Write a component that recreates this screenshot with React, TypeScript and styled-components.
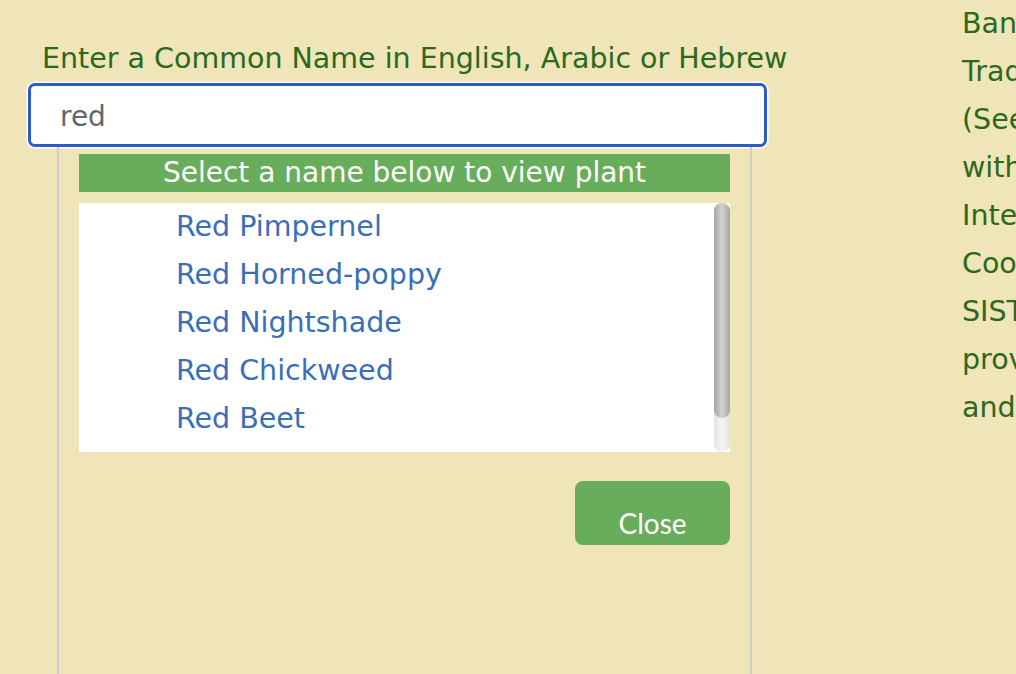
import React from "react";
import styled, { createGlobalStyle } from "styled-components";

const GlobalStyle = createGlobalStyle`
  html, body {
    margin: 0;
    padding: 0;
    background: #f0e5b9;
    overflow: hidden;
  }
  body {
    font-family: "DejaVu Sans", "Liberation Sans", sans-serif;
  }
`;

const Page = styled.div`
  display: flex;
  align-items: flex-start;
  width: 1016px;
  height: 674px;
  padding-left: 28px;
  box-sizing: border-box;
  overflow: hidden;
`;

const LeftColumn = styled.div`
  flex: 0 0 739px;
  width: 739px;
  min-width: 0;
  display: flex;
  flex-direction: column;
  padding-top: 41px;
`;

const Label = styled.label`
  display: block;
  padding-left: 14px;
  font-size: 28.5px;
  line-height: 36px;
  color: #2b691c;
  white-space: nowrap;
  margin-bottom: 6px;
`;

const SearchInput = styled.input`
  box-sizing: border-box;
  width: 739px;
  height: 64px;
  border: 3px solid #2a5dc7;
  border-radius: 7px;
  box-shadow: 0 0 0 1.5px #ffffff;
  background: #ffffff;
  padding: 2px 0 0 29px;
  font-family: "DejaVu Sans", "Liberation Sans", sans-serif;
  font-size: 28px;
  color: #666666;
  outline: none;
`;

const Panel = styled.div`
  margin-left: 29px;
  width: 695px;
  box-sizing: border-box;
  min-height: 560px;
  border-left: 2px solid #cfcfcf;
  border-right: 2px solid #cfcfcf;
  padding: 7px 20px 0;
  display: flex;
  flex-direction: column;
`;

const Header = styled.div`
  height: 38px;
  background: #68ad5c;
  color: #ffffff;
  font-size: 28px;
  line-height: 38px;
  text-align: center;
  white-space: nowrap;
`;

const ListBox = styled.div`
  display: flex;
  margin-top: 11px;
  height: 249px;
  background: #ffffff;
`;

const List = styled.ul`
  flex: 1;
  list-style: none;
  margin: 0;
  padding: 0;
  overflow: hidden;
`;

const Item = styled.li`
  padding-left: 97px;
  height: 48px;
  font-size: 28.5px;
  line-height: 48px;
  color: #3a6fb7;
  white-space: nowrap;
  cursor: pointer;
`;

const ScrollTrack = styled.div`
  flex: 0 0 16px;
  display: flex;
  flex-direction: column;
  border-radius: 8px;
  background: linear-gradient(to right, #e2e2e2, #f6f6f6 50%, #e2e2e2);
`;

const ScrollThumb = styled.div`
  border-radius: 8px;
  background: linear-gradient(to right, #a4a4a4, #d3d3d3 50%, #a4a4a4);
`;

const Actions = styled.div`
  display: flex;
  justify-content: flex-end;
  margin-top: 29px;
`;

const CloseButton = styled.button`
  width: 155px;
  height: 64px;
  border: none;
  border-radius: 8px;
  background: #68ad5c;
  color: #ffffff;
  font-family: Lato, "Open Sans", sans-serif;
  font-size: 28px;
  padding: 20px 0 0;
  line-height: 34px;
  cursor: pointer;
`;

const RightColumn = styled.div`
  margin-left: 195px;
  font-size: 28.5px;
  line-height: 48px;
  color: #2b691c;
  white-space: nowrap;
`;

const Line = styled.div`
  display: block;
`;

const names = [
  "Red Pimpernel",
  "Red Horned-poppy",
  "Red Nightshade",
  "Red Chickweed",
  "Red Beet",
];

const introLines = [
  "Bank of",
  "Traditional",
  "(Seed",
  "with the",
  "International",
  "Cooperation",
  "SISTERS",
  "provides",
  "and",
];

const thumbRatio = 215 / 249;

export default function App() {
  return (
    <>
      <GlobalStyle />
      <Page>
        <LeftColumn>
          <Label htmlFor="common-name">
            Enter a Common Name in English, Arabic or Hebrew
          </Label>
          <SearchInput id="common-name" defaultValue="red" />
          <Panel>
            <Header>Select a name below to view plant</Header>
            <ListBox>
              <List>
                {names.map((n) => (
                  <Item key={n}>{n}</Item>
                ))}
              </List>
              <ScrollTrack>
                <ScrollThumb style={{ height: `${thumbRatio * 100}%` }} />
              </ScrollTrack>
            </ListBox>
            <Actions>
              <CloseButton>Close</CloseButton>
            </Actions>
          </Panel>
        </LeftColumn>
        <RightColumn>
          {introLines.map((l) => (
            <Line key={l}>{l}</Line>
          ))}
        </RightColumn>
      </Page>
    </>
  );
}
